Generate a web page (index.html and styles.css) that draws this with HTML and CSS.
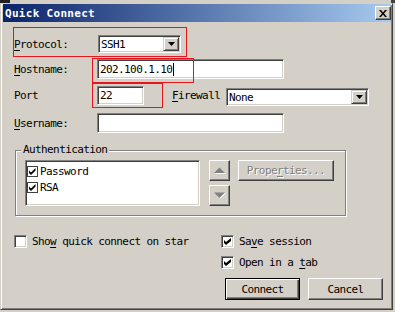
FILE: index.html
```html
<!DOCTYPE html>
<html>
<head>
    <title>Quick Connect</title>
    <meta charset="utf-8">
    <link rel="stylesheet" href="styles.css">
</head>
<body>
    <div class="desk"><span class="desk-left"></span><span class="desk-right"></span></div>
    <div class="window">
        <div class="titlebar">
            <span class="title">Quick Connect</span>
            <span class="close-btn">
                <svg width="8" height="7" viewBox="0 0 8 7"><path d="M0 0h2l2 2.4 2-2.4h2l-3 3.5 3 3.5h-2l-2-2.4-2 2.4h-2l3-3.5z" fill="#000"/></svg>
            </span>
        </div>
        <div class="content">
            <div class="row row-protocol">
                <span class="lbl"><u>P</u>rotocol:</span>
                <div class="combo combo-protocol">
                    <span class="combo-value">SSH1</span>
                    <span class="combo-btn"><svg width="7" height="4" viewBox="0 0 7 4"><path d="M0 0h7l-3.5 4z" fill="#000"/></svg></span>
                </div>
            </div>
            <div class="row row-host">
                <span class="lbl"><u>H</u>ostname:</span>
                <div class="field field-wide">202.100.1.10<span class="caret"></span></div>
            </div>
            <div class="row row-port">
                <span class="lbl">Port</span>
                <div class="field field-port">22</div>
                <span class="lbl lbl-firewall"><u>F</u>irewall</span>
                <div class="combo combo-firewall">
                    <span class="combo-value">None</span>
                    <span class="combo-btn"><svg width="7" height="4" viewBox="0 0 7 4"><path d="M0 0h7l-3.5 4z" fill="#000"/></svg></span>
                </div>
            </div>
            <div class="row row-user">
                <span class="lbl"><u>U</u>sername:</span>
                <div class="field field-wide"></div>
            </div>

            <div class="group">
                <div class="group-title"><span>Authentication</span></div>
                <div class="group-body">
                    <div class="listbox">
                        <div class="list-item">
                            <svg class="list-check" width="11" height="11" viewBox="0 0 11 11"><rect x="0.5" y="0.5" width="10" height="10" fill="#fff" stroke="#404040"/><path d="M2 4.5l2 2 4.5-4.5v2.5l-4.5 4.5-2-2z" fill="#000"/></svg>
                            <span>Password</span>
                        </div>
                        <div class="list-item">
                            <svg class="list-check" width="11" height="11" viewBox="0 0 11 11"><rect x="0.5" y="0.5" width="10" height="10" fill="#fff" stroke="#404040"/><path d="M2 4.5l2 2 4.5-4.5v2.5l-4.5 4.5-2-2z" fill="#000"/></svg>
                            <span>RSA</span>
                        </div>
                    </div>
                    <div class="nav-btns">
                        <span class="btn nav-btn"><svg width="13" height="7" viewBox="0 0 13 7"><path d="M2 7h11l-5.5-5.5z" fill="#fff"/><path d="M1 6h11l-5.5-5.5z" fill="#808080"/></svg></span>
                        <span class="btn nav-btn"><svg width="13" height="7" viewBox="0 0 13 7"><path d="M2 1h11l-5.5 5.5z" fill="#fff"/><path d="M1 0.5h11l-5.5 5.5z" fill="#808080"/></svg></span>
                    </div>
                    <span class="btn btn-props">Prope<u>r</u>ties...</span>
                </div>
            </div>

            <div class="bottom">
                <div class="bottom-left">
                    <div class="check-row">
                        <span class="checkbox"></span>
                        <span class="check-text">Sho<u>w</u> quick connect on star</span>
                    </div>
                </div>
                <div class="bottom-right">
                    <div class="check-row">
                        <span class="checkbox"><svg width="7" height="7" viewBox="0 0 7 7"><path d="M0 2l2 2 5-4v3l-5 4-2-2z" fill="#000"/></svg></span>
                        <span class="check-text">Sa<u>v</u>e session</span>
                    </div>
                    <div class="check-row">
                        <span class="checkbox"><svg width="7" height="7" viewBox="0 0 7 7"><path d="M0 2l2 2 5-4v3l-5 4-2-2z" fill="#000"/></svg></span>
                        <span class="check-text">Open in a <u>t</u>ab</span>
                    </div>
                    <div class="actions">
                        <span class="btn btn-default">Connect</span>
                        <span class="btn">Cancel</span>
                    </div>
                </div>
            </div>
        </div>
    </div>

    <!-- annotation boxes drawn over the dialog -->
    <div class="mark mark-protocol"></div>
    <div class="mark mark-host"></div>
    <div class="mark mark-port"></div>
</body>
</html>
```

FILE: styles.css
```css
html, body {
    margin: 0;
    padding: 0;
    width: 395px;
    height: 312px;
    overflow: hidden;
    background: #d4d0c8;
    font-family: "DejaVu Sans Mono", "Liberation Mono", monospace;
    font-size: 11px;
    letter-spacing: -0.6px;
    color: #000;
}

body {
    position: relative;
}

u {
    text-underline-offset: 2px;
}

.desk {
    display: flex;
    height: 3px;
}
.desk-left {
    width: 10px;
    background: #202020;
}
.desk-right {
    width: 4px;
    margin-left: auto;
    background: #404040;
}

.window {
    box-sizing: border-box;
    width: 393px;
    height: 307px;
    border: 1px solid;
    border-color: #d4d0c8 #404040 #404040 #d4d0c8;
    box-shadow: inset 1px 1px #fff, inset -1px -1px #808080;
    padding: 0 1px 1px 2px;
}

.titlebar {
    display: flex;
    align-items: center;
    height: 18px;
    padding-left: 2px;
    background: linear-gradient(to right, #0a246a, #a6caf0);
}
.title {
    color: #fff;
    font-weight: bold;
    letter-spacing: 0.3px;
}
.close-btn {
    box-sizing: border-box;
    display: flex;
    align-items: center;
    justify-content: center;
    width: 16px;
    height: 14px;
    margin-left: auto;
    background: #d4d0c8;
    border: 1px solid;
    border-color: #fff #404040 #404040 #fff;
    box-shadow: inset -1px -1px #808080;
}

.content {
    padding-left: 11px;
}

.row {
    display: flex;
    align-items: center;
}
.row-protocol {
    margin-top: 13px;
    height: 18px;
}
.row-host {
    margin-top: 6px;
    height: 20px;
}
.row-port {
    margin-top: 7px;
    height: 20px;
    align-items: flex-start;
}
.row-port .lbl {
    line-height: 20px;
}
.row-user {
    margin-top: 7px;
    height: 20px;
}

.lbl {
    width: 83px;
    flex: none;
}
.lbl-firewall {
    width: 54px;
    margin-left: 28px;
}

.field, .combo {
    box-sizing: border-box;
    display: flex;
    align-items: center;
    background: #fff;
    border: 1px solid;
    border-color: #808080 #fff #fff #808080;
    box-shadow: inset 1px 1px #404040, inset -1px -1px #d4d0c8;
    padding: 1px 1px 1px 2px;
}
.field-wide {
    width: 187px;
    height: 20px;
}
.field-port {
    width: 47px;
    height: 19px;
}
.caret {
    display: inline-block;
    width: 1px;
    height: 13px;
    margin-left: 1px;
    background: #000;
}

.combo-protocol {
    width: 83px;
    height: 18px;
    margin-left: 1px;
}
.combo-firewall {
    width: 143px;
    height: 18px;
    margin-top: 2px;
}
.combo-btn {
    box-sizing: border-box;
    display: flex;
    align-items: center;
    justify-content: center;
    width: 16px;
    height: 14px;
    margin-left: auto;
    background: #d4d0c8;
    border: 1px solid;
    border-color: #d4d0c8 #404040 #404040 #d4d0c8;
    box-shadow: inset 1px 1px #fff, inset -1px -1px #808080;
}

.group {
    box-sizing: border-box;
    width: 331px;
    margin: 17px 0 0 1px;
    padding: 0 9px 9px 9px;
    border: 1px solid #808080;
    box-shadow: inset 1px 1px #fff, 1px 1px #fff;
}
.group-title {
    height: 12px;
    line-height: 12px;
    margin-top: -7px;
}
.group-title span {
    margin-left: -4px;
    padding: 0 2px;
    background: #d4d0c8;
}
.group-body {
    display: flex;
    align-items: flex-start;
    margin-top: 4px;
}

.listbox {
    box-sizing: border-box;
    width: 175px;
    height: 46px;
    padding-top: 2px;
    background: #fff;
    border: 1px solid;
    border-color: #808080 #fff #fff #808080;
    box-shadow: inset 1px 1px #404040, inset -1px -1px #d4d0c8;
}
.list-item {
    display: flex;
    align-items: center;
    height: 16px;
    padding-left: 1px;
}
.list-check {
    margin-right: 2px;
}

.btn {
    box-sizing: border-box;
    display: flex;
    align-items: center;
    justify-content: center;
    background: #d4d0c8;
    border: 1px solid;
    border-color: #fff #404040 #404040 #fff;
    box-shadow: inset -1px -1px #808080;
}
.nav-btns {
    display: flex;
    flex-direction: column;
    gap: 4px;
    margin-left: 9px;
}
.nav-btn {
    width: 21px;
    height: 21px;
}
.btn-props {
    width: 96px;
    height: 21px;
    margin-left: 8px;
    color: #808080;
    text-shadow: 1px 1px #fff;
}

.bottom {
    display: flex;
    margin-top: 19px;
}
.bottom-left {
    width: 207px;
}
.check-row {
    display: flex;
    align-items: center;
    height: 13px;
    margin-bottom: 8px;
}
.checkbox {
    box-sizing: border-box;
    display: flex;
    align-items: center;
    justify-content: center;
    width: 13px;
    height: 13px;
    background: #fff;
    border: 1px solid;
    border-color: #808080 #fff #fff #808080;
    box-shadow: inset 1px 1px #404040, inset -1px -1px #d4d0c8;
}
.check-text {
    margin-left: 5px;
}

.actions {
    display: flex;
    gap: 8px;
    margin: 9px 0 0 4px;
}
.actions .btn {
    width: 75px;
    height: 22px;
}
.actions .btn-default {
    border-color: #000;
    box-shadow: inset 1px 1px #fff, inset -1px -1px #404040, inset -2px -2px #808080;
}

.mark {
    position: absolute;
    box-sizing: border-box;
    border: 1px solid #e8141b;
}
.mark-protocol {
    left: 13px;
    top: 27px;
    width: 174px;
    height: 30px;
}
.mark-host {
    left: 92px;
    top: 58px;
    width: 102px;
    height: 25px;
}
.mark-port {
    left: 92px;
    top: 83px;
    width: 71px;
    height: 25px;
}
```
